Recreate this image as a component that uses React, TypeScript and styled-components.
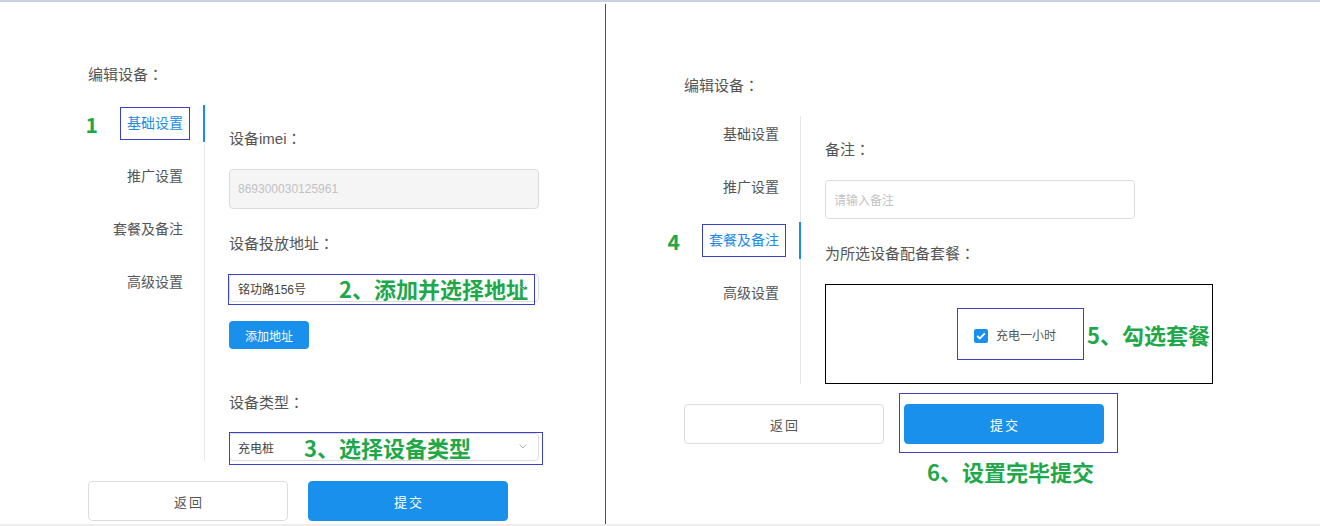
import React from "react";
import styled, { createGlobalStyle } from "styled-components";

const GlobalStyle = createGlobalStyle`
  html, body {
    margin: 0;
    padding: 0;
    background: #ffffff;
  }
  body {
    font-family: "Liberation Sans", "Noto Sans CJK SC", sans-serif;
  }
  * {
    box-sizing: border-box;
  }
`;

const markBlue = "#3b40c6";
const noteGreen = "#1fa84a";
const primary = "#1890ec";

const Page = styled.div`
  width: 1320px;
  height: 526px;
  border-top: 2px solid #c9d1e2;
  border-bottom: 2px solid #eeeeee;
  padding-top: 2px;
  display: flex;
  overflow: hidden;
`;

const Panel = styled.section<{ $left: number; $top: number; $divider?: boolean }>`
  width: ${({ $divider }) => ($divider ? "606px" : "auto")};
  flex: ${({ $divider }) => ($divider ? "none" : "1")};
  padding: ${({ $top, $left }) => `${$top}px 0 0 ${$left}px`};
  border-right: ${({ $divider }) => ($divider ? `1px solid ${markBlue}` : "none")};
  display: flex;
  flex-direction: column;
  align-items: flex-start;
`;

const Heading = styled.h2`
  margin: 0 0 20px;
  height: 22px;
  font-size: 15px;
  line-height: 22px;
  font-weight: normal;
  color: #555555;
  white-space: nowrap;
`;

// centred full-width colon, as the original UI font draws it
const Colon = styled.span`
  font-family: "Noto Sans CJK TC", "Noto Sans CJK SC", sans-serif;
`;

const Body = styled.div`
  display: flex;
  align-items: stretch;
`;

const Nav = styled.nav`
  width: 117px;
  border-right: 1px solid #e6e6e6;
  display: flex;
  flex-direction: column;
  gap: 16px;
`;

const NavItem = styled.div<{ $active?: boolean }>`
  height: 37px;
  margin-right: -1px;
  padding-right: 13px;
  border-right: 2px solid ${({ $active }) => ($active ? "#1a8cf0" : "transparent")};
  display: flex;
  align-items: center;
  justify-content: flex-end;
`;

const NavText = styled.span<{ $active?: boolean; $framed?: boolean }>`
  position: relative;
  padding: ${({ $framed }) => ($framed ? "7px 6px" : "6px")};
  border: 1px solid ${({ $framed }) => ($framed ? markBlue : "transparent")};
  font-size: 14px;
  line-height: 17px;
  color: ${({ $active }) => ($active ? "#1d8be6" : "#555555")};
  white-space: nowrap;
`;

const StepNumber = styled.span`
  position: absolute;
  right: calc(100% + 23px);
  top: 50%;
  transform: translateY(-50%);
  font-family: "Noto Sans CJK SC", sans-serif;
  font-weight: 700;
  font-size: 21px;
  line-height: 1;
  color: ${noteGreen};
`;

const Content = styled.div`
  padding-left: 24px;
  display: flex;
  flex-direction: column;
  align-items: flex-start;
`;

const Label = styled.div`
  margin: 23px 0 20px;
  height: 22px;
  font-size: 15px;
  line-height: 22px;
  color: #555555;
  white-space: nowrap;

  &:first-child {
    margin-top: 22px;
  }
`;

const TextInput = styled.div<{ $disabled?: boolean; $height: number }>`
  width: 310px;
  height: ${({ $height }) => $height}px;
  padding: 0 8px;
  border: 1px solid #dcdcdc;
  border-radius: 4px;
  background: ${({ $disabled }) => ($disabled ? "#f5f5f5" : "#ffffff")};
  color: #c2c2c2;
  font-size: 12px;
  display: flex;
  align-items: center;
`;

const Marked = styled.div`
  position: relative;
`;

const Frame = styled.span<{ $t: number; $r: number; $b: number; $l: number }>`
  position: absolute;
  top: ${({ $t }) => $t}px;
  right: ${({ $r }) => $r}px;
  bottom: ${({ $b }) => $b}px;
  left: ${({ $l }) => $l}px;
  border: 1px solid ${markBlue};
  pointer-events: none;
`;

const Select = styled.div`
  position: relative;
  width: 310px;
  height: 28px;
  padding-left: 8px;
  border: 1px solid #dcdcdc;
  border-radius: 4px;
  font-size: 12px;
  color: #444444;
  display: flex;
  align-items: center;
  white-space: nowrap;
`;

const Arrow = styled.svg`
  position: absolute;
  right: 11px;
  top: 50%;
  margin-top: -3px;
`;

const Note = styled.span<{ $gap?: number }>`
  margin-left: ${({ $gap }) => $gap ?? 0}px;
  font-family: "Noto Sans CJK SC", sans-serif;
  font-weight: 700;
  font-size: 22px;
  line-height: 26px;
  color: ${noteGreen};
  white-space: nowrap;
`;

const AddButton = styled.button`
  width: 80px;
  height: 28px;
  margin: 19px 0;
  border: none;
  border-radius: 4px;
  background: ${primary};
  color: #ffffff;
  font-family: inherit;
  font-size: 12px;
  padding: 0;
`;

const PackageBox = styled.div`
  width: 388px;
  height: 100px;
  border: 1px solid #000000;
  padding-left: 131px;
  display: flex;
  align-items: center;
`;

const CheckFrame = styled.label`
  padding: 20px 27px 16px 16px;
  border: 1px solid ${markBlue};
  display: flex;
  align-items: center;
  gap: 8px;
  font-size: 12px;
  line-height: 14px;
  color: #555555;
`;

const CheckBox = styled.span`
  width: 14px;
  height: 14px;
  border-radius: 2px;
  background: ${primary};
  display: flex;
  align-items: center;
  justify-content: center;
`;

const Footer = styled.div`
  margin-top: 20px;
  display: flex;
  gap: 20px;
`;

const Button = styled.button<{ $primary?: boolean }>`
  width: 200px;
  height: 40px;
  padding: 0 0 0 2px;
  border: 1px solid ${({ $primary }) => ($primary ? primary : "#dcdcdc")};
  border-radius: 4px;
  background: ${({ $primary }) => ($primary ? primary : "#ffffff")};
  color: ${({ $primary }) => ($primary ? "#ffffff" : "#555555")};
  font-family: inherit;
  font-size: 13px;
  letter-spacing: 2px;
`;

const Caption = styled(Note)`
  position: absolute;
  top: calc(100% + 14px);
  left: 23px;
`;

const navLabels = ["基础设置", "推广设置", "套餐及备注", "高级设置"];

function SideNav({ active, step }: { active: number; step: string }) {
  return (
    <Nav>
      {navLabels.map((label, i) => (
        <NavItem key={label} $active={i === active}>
          <NavText $active={i === active} $framed={i === active}>
            {i === active && <StepNumber>{step}</StepNumber>}
            {label}
          </NavText>
        </NavItem>
      ))}
    </Nav>
  );
}

function Chevron() {
  return (
    <Arrow width="8" height="5" viewBox="0 0 8 5">
      <polyline points="0.5,0.5 4,4 7.5,0.5" fill="none" stroke="#b4b4b4" strokeWidth="1" />
    </Arrow>
  );
}

export default function App() {
  return (
    <>
      <GlobalStyle />
      <Page>
        <Panel $divider $left={88} $top={59}>
          <Heading>
            编辑设备<Colon>：</Colon>
          </Heading>
          <Body>
            <SideNav active={0} step="1" />
            <Content>
              <Label>
                设备imei<Colon>：</Colon>
              </Label>
              <TextInput $disabled $height={40}>869300030125961</TextInput>
              <Label>
                设备投放地址<Colon>：</Colon>
              </Label>
              <Marked>
                <Select>
                  铭功路156号
                  <Note $gap={33}>2、添加并选择地址</Note>
                  <Chevron />
                </Select>
                <Frame $t={0} $r={4} $b={-3} $l={-1} />
              </Marked>
              <AddButton>添加地址</AddButton>
              <Label>
                设备类型<Colon>：</Colon>
              </Label>
              <Marked>
                <Select>
                  充电桩
                  <Note $gap={30}>3、选择设备类型</Note>
                  <Chevron />
                </Select>
                <Frame $t={-1} $r={-4} $b={-4} $l={0} />
              </Marked>
            </Content>
          </Body>
          <Footer>
            <Button>返回</Button>
            <Button $primary>提交</Button>
          </Footer>
        </Panel>

        <Panel $left={78} $top={70}>
          <Heading>
            编辑设备<Colon>：</Colon>
          </Heading>
          <Body>
            <SideNav active={2} step="4" />
            <Content>
              <Label>
                备注<Colon>：</Colon>
              </Label>
              <TextInput $height={39}>请输入备注</TextInput>
              <Label>
                为所选设备配备套餐<Colon>：</Colon>
              </Label>
              <PackageBox>
                <CheckFrame>
                  <CheckBox>
                    <svg width="10" height="8" viewBox="0 0 10 8">
                      <polyline
                        points="1.2,4 3.8,6.4 8.8,1.3"
                        fill="none"
                        stroke="#ffffff"
                        strokeWidth="1.8"
                      />
                    </svg>
                  </CheckBox>
                  充电一小时
                </CheckFrame>
                <Note $gap={3}>5、勾选套餐</Note>
              </PackageBox>
            </Content>
          </Body>
          <Footer>
            <Button>返回</Button>
            <Marked>
              <Button $primary>提交</Button>
              <Frame $t={-11} $r={-14} $b={-9} $l={-5} />
              <Caption>6、设置完毕提交</Caption>
            </Marked>
          </Footer>
        </Panel>
      </Page>
    </>
  );
}
